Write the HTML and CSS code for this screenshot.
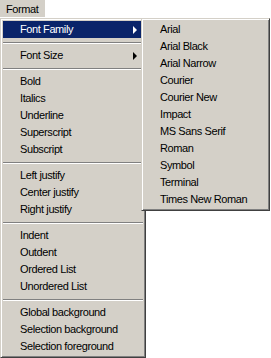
FILE: index.html
```html
<!DOCTYPE html>
<html>
<head>
<meta charset="utf-8">
<link rel="stylesheet" href="styles.css">
</head>
<body>
<div class="menubar">
  <div class="menubar-item">Format</div>
</div>
<div class="menu main">
  <div class="item active"><span>Font Family</span><i class="arrow"></i></div>
  <div class="sep"></div>
  <div class="item"><span>Font Size</span><i class="arrow"></i></div>
  <div class="sep"></div>
  <div class="item">Bold</div>
  <div class="item">Italics</div>
  <div class="item">Underline</div>
  <div class="item">Superscript</div>
  <div class="item">Subscript</div>
  <div class="sep"></div>
  <div class="item">Left justify</div>
  <div class="item">Center justify</div>
  <div class="item">Right justify</div>
  <div class="sep"></div>
  <div class="item">Indent</div>
  <div class="item">Outdent</div>
  <div class="item">Ordered List</div>
  <div class="item">Unordered List</div>
  <div class="sep"></div>
  <div class="item">Global background</div>
  <div class="item">Selection background</div>
  <div class="item">Selection foreground</div>
</div>
<div class="menu sub">
  <div class="item">Arial</div>
  <div class="item">Arial Black</div>
  <div class="item">Arial Narrow</div>
  <div class="item">Courier</div>
  <div class="item">Courier New</div>
  <div class="item">Impact</div>
  <div class="item">MS Sans Serif</div>
  <div class="item">Roman</div>
  <div class="item">Symbol</div>
  <div class="item">Terminal</div>
  <div class="item">Times New Roman</div>
</div>
</body>
</html>
```
FILE: styles.css
```css
html, body {
  margin: 0;
  padding: 0;
  background: #ffffff;
  width: 271px;
  height: 358px;
  overflow: hidden;
  font-family: "Liberation Sans", Arial, sans-serif;
  font-size: 11px;
  letter-spacing: -0.4px;
  color: #000;
}
.menubar {
  display: flex;
  height: 18px;
}
.menubar-item {
  width: 39px;
  height: 17px;
  padding-left: 6px;
  background: #d4d0c8;
  line-height: 19px;
}
.menu {
  position: absolute;
  top: 18px;
  background: #d4d0c8;
  border: 1px solid;
  border-color: #d4d0c8 #404040 #404040 #d4d0c8;
  box-shadow: inset 1px 1px #ffffff, inset -1px -1px #808080;
  padding: 2px;
  box-sizing: border-box;
}
.main {
  left: 0;
  width: 146px;
}
.sub {
  left: 141px;
  width: 129px;
}
.item {
  height: 17px;
  line-height: 17px;
  padding-left: 17px;
  padding-right: 6px;
  display: flex;
  justify-content: space-between;
  align-items: center;
  white-space: nowrap;
}
.sub .item {
  padding-left: 16px;
}
.item.active {
  background: #0a246a;
  color: #ffffff;
}
.arrow {
  width: 0;
  height: 0;
  border-left: 4px solid #000;
  border-top: 4px solid transparent;
  border-bottom: 4px solid transparent;
}
.active .arrow {
  border-left-color: #ffffff;
}
.sep {
  height: 9px;
  box-sizing: border-box;
  padding-top: 4px;
}
.sep::before {
  content: "";
  display: block;
  height: 1px;
  background: #808080;
  border-bottom: 1px solid #ffffff;
}
```
